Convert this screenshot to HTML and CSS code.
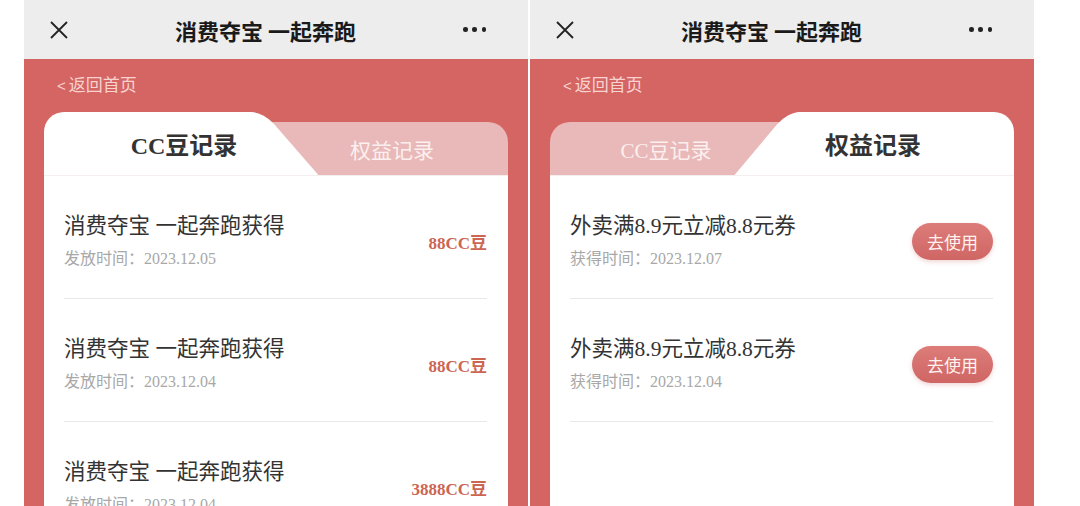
FILE: index.html
```html
<!DOCTYPE html>
<html lang="zh-CN">
<head>
    <meta charset="UTF-8">
    <meta name="viewport" content="width=device-width, initial-scale=1.0">
    <title>消费夺宝 一起奔跑</title>
    <link rel="stylesheet" href="styles.css">
</head>
<body>
    <div class="screens">

        <!-- CC豆记录 -->
        <section class="phone">
            <header class="nav">
                <svg class="nav-close" width="18" height="18" viewBox="0 0 18 18">
                    <path d="M1 1L17 17M17 1L1 17" stroke="#222" stroke-width="1.8" fill="none"/>
                </svg>
                <h1 class="nav-title">消费夺宝 一起奔跑</h1>
                <span class="nav-more"><i></i><i></i><i></i></span>
            </header>
            <div class="page">
                <a class="back" href="#"><span class="back-arrow">&lt;</span>返回首页</a>
                <div class="card">
                    <div class="tabs">
                        <div class="tab tab-active">CC豆记录</div>
                        <div class="tab">权益记录</div>
                    </div>
                    <ul class="records">
                        <li class="record">
                            <div>
                                <p class="record-title">消费夺宝 一起奔跑获得</p>
                                <p class="record-time">发放时间：2023.12.05</p>
                            </div>
                            <span class="record-amount">88CC豆</span>
                        </li>
                        <li class="record">
                            <div>
                                <p class="record-title">消费夺宝 一起奔跑获得</p>
                                <p class="record-time">发放时间：2023.12.04</p>
                            </div>
                            <span class="record-amount">88CC豆</span>
                        </li>
                        <li class="record">
                            <div>
                                <p class="record-title">消费夺宝 一起奔跑获得</p>
                                <p class="record-time">发放时间：2023.12.04</p>
                            </div>
                            <span class="record-amount">3888CC豆</span>
                        </li>
                    </ul>
                </div>
            </div>
        </section>

        <!-- 权益记录 -->
        <section class="phone">
            <header class="nav">
                <svg class="nav-close" width="18" height="18" viewBox="0 0 18 18">
                    <path d="M1 1L17 17M17 1L1 17" stroke="#222" stroke-width="1.8" fill="none"/>
                </svg>
                <h1 class="nav-title">消费夺宝 一起奔跑</h1>
                <span class="nav-more"><i></i><i></i><i></i></span>
            </header>
            <div class="page">
                <a class="back" href="#"><span class="back-arrow">&lt;</span>返回首页</a>
                <div class="card">
                    <div class="tabs">
                        <div class="tab">CC豆记录</div>
                        <div class="tab tab-active">权益记录</div>
                    </div>
                    <ul class="records">
                        <li class="record">
                            <div>
                                <p class="record-title">外卖满8.9元立减8.8元券</p>
                                <p class="record-time">获得时间：2023.12.07</p>
                            </div>
                            <button class="use-btn">去使用</button>
                        </li>
                        <li class="record">
                            <div>
                                <p class="record-title">外卖满8.9元立减8.8元券</p>
                                <p class="record-time">获得时间：2023.12.04</p>
                            </div>
                            <button class="use-btn">去使用</button>
                        </li>
                    </ul>
                </div>
            </div>
        </section>

    </div>
</body>
</html>
```

FILE: styles.css
```css
html, body {
    margin: 0;
    padding: 0;
    height: 100%;
    overflow: hidden;
    background: #fff;
}

* {
    box-sizing: border-box;
}

.screens {
    display: flex;
    gap: 2px;
    padding-left: 24px;
    height: 506px;
}

.phone {
    width: 504px;
    height: 506px;
    display: flex;
    flex-direction: column;
    overflow: hidden;
}

/* Barra superior */
.nav {
    height: 59px;
    flex-shrink: 0;
    background-color: #ededed;
    display: grid;
    grid-template-columns: 18px 1fr 23px;
    align-items: center;
    padding: 0 42px 0 26px;
}

.nav-close {
    display: block;
}

.nav-title {
    margin: 0;
    text-align: center;
    font-family: "Noto Sans CJK SC", sans-serif;
    font-size: 22px;
    font-weight: 700;
    color: #1a1a1a;
    line-height: 28px;
}

.nav-more {
    display: flex;
    justify-content: space-between;
    align-items: center;
}

.nav-more i {
    width: 4.5px;
    height: 4.5px;
    border-radius: 50%;
    background-color: #222;
}

/* Conteudo */
.page {
    flex: 1;
    background-color: #d46562;
    padding: 0 20px;
    display: flex;
    flex-direction: column;
}

.back {
    display: block;
    margin: 14px 0 15px 13px;
    line-height: 22px;
    font-family: "Noto Sans CJK SC", sans-serif;
    font-size: 17px;
    color: #f8d2d0;
    text-decoration: none;
}

.back-arrow {
    font-family: "Liberation Sans", sans-serif;
    font-size: 15px;
    margin-right: 3px;
}

.card {
    flex: 1;
    display: flex;
    flex-direction: column;
    font-family: "Liberation Serif", "Noto Sans CJK SC", serif;
}

/* Abas */
.tabs {
    position: relative;
    display: flex;
    height: 63px;
}

/* faixa rosa das abas inativas */
.tabs::before {
    content: "";
    position: absolute;
    top: 10px;
    left: 0;
    right: 0;
    bottom: 0;
    background-color: #e8b9b8;
    border-radius: 20px 20px 0 0;
}

.tab {
    flex: 0 0 50%;
    position: relative;
    z-index: 1;
    margin-top: 10px;
    display: flex;
    align-items: center;
    justify-content: center;
    color: #fcefef;
    font-size: 21px;
}

.tab-active {
    margin-top: 0;
    color: #333;
    font-size: 24px;
    font-weight: 700;
}

.tab-active::before,
.tab-active::after {
    content: "";
    position: absolute;
    top: 0;
    bottom: 0;
    background-color: #fff;
    z-index: -1;
}

.tab-active::after {
    width: 90px;
}

/* aba ativa a esquerda */
.tab-active:first-child {
    padding-left: 48px;
}

.tab-active:first-child::before {
    left: 0;
    right: 40px;
    border-top-left-radius: 20px;
}

.tab-active:first-child::after {
    right: -15px;
    transform: skewX(41deg);
    border-top-right-radius: 12px;
}

/* aba ativa a direita */
.tab-active:last-child {
    padding-right: 50px;
}

.tab-active:last-child::before {
    left: 40px;
    right: 0;
    border-top-right-radius: 20px;
}

.tab-active:last-child::after {
    left: -21px;
    transform: skewX(-40deg);
    border-top-left-radius: 12px;
}

/* Lista */
.records {
    flex: 1;
    list-style: none;
    margin: 0;
    padding: 0 21px 0 20px;
    background-color: #fff;
    border-top: 1px solid #f4eeee;
}

.record {
    display: flex;
    align-items: center;
    justify-content: space-between;
    padding: 38px 0 29px;
    border-bottom: 1px solid #e8e8e8;
}

.record-title {
    margin: 0;
    font-size: 21.5px;
    line-height: 24px;
    color: #333;
}

.record-time {
    margin: 11px 0 0;
    font-size: 16px;
    line-height: 20px;
    color: #a8a8a8;
}

.record-amount {
    font-size: 17px;
    font-weight: 700;
    color: #cc6552;
}

.use-btn {
    width: 81px;
    height: 37px;
    padding: 0;
    border: none;
    border-radius: 19px;
    background: linear-gradient(#dc7c79, #cf6664);
    box-shadow: 0 2px 4px rgba(200, 90, 90, 0.25);
    color: #fff3f1;
    font-family: "Noto Sans CJK SC", sans-serif;
    font-size: 17px;
    cursor: pointer;
}
```
